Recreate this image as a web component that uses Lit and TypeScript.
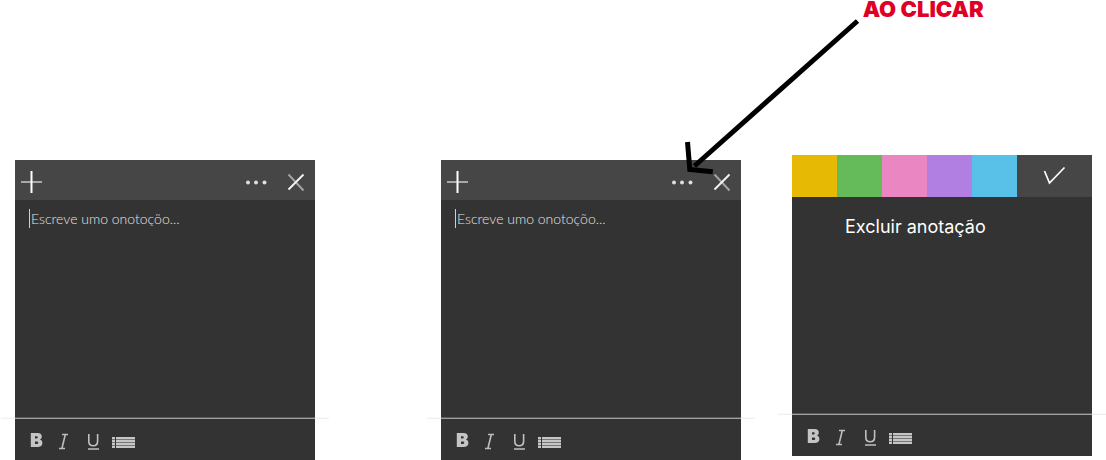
import { LitElement, html, css } from "lit";
import { customElement, property } from "lit/decorators.js";

@customElement("note-toolbar")
class NoteToolbar extends LitElement {
  static styles = css`
    :host { display: block; }
    .bar {
      display: flex;
      align-items: flex-start;
      position: relative;
      height: 42px;
      box-sizing: border-box;
      padding: 14px 15px 0;
    }
    .rule {
      position: absolute;
      top: -1px;
      left: -14px;
      right: -14px;
      height: 2px;
      background: linear-gradient(#fafafa 50%, #f0f0f0 50%);
    }
    .rule::after {
      content: "";
      position: absolute;
      inset: 0 14px;
      background: linear-gradient(#5c5c5c 50%, #a0a0a0 50%);
    }
    button {
      border: 0;
      padding: 0;
      background: none;
      display: block;
      height: 18px;
    }
    svg { display: block; }
    .bold { width: 14px; margin-right: 12px; }
    .italic { width: 14px; margin-right: 16px; }
    .underline { width: 14px; margin-right: 12px; }
    .list { width: 23px; }
  `;
  render() {
    return html`
      <div class="bar" role="toolbar" aria-label="Formatação">
        <div class="rule"></div>
        <button class="bold" aria-label="Negrito">
          <svg width="14" height="18" viewBox="0 0 14 18">
            <path fill="#c4c4c4" fill-rule="evenodd" d="M.8 1h6.700c3 0 4.300 1.400 4.300 3.500 0 1.500-.7 2.500-1.900 3 1.600.5 2.500 1.700 2.500 3.400 0 2.700-1.800 4.100-4.900 4.100H.8zM5 4.200v2.200h1.700c1.500 0 1.500-2.200 0-2.200zM5 9.500V12h1.900c1.800 0 1.800-2.500 0-2.500z"/>
          </svg>
        </button>
        <button class="italic" aria-label="Itálico">
          <svg width="14" height="18" viewBox="0 0 14 18" fill="none" stroke="#bdbdbd">
            <path stroke-width="1.300" d="M6 2.500h6M3 16.500h6"/><path stroke-width="1.600" d="M9.300 2.500l-3.400 14"/>
          </svg>
        </button>
        <button class="underline" aria-label="Sublinhado">
          <svg width="14" height="18" viewBox="0 0 14 18" fill="none" stroke="#c0c0c0">
            <path stroke-width="1.600" d="M2.800 2v7.200c0 2.900 1.700 4.500 4.400 4.500s4.400-1.600 4.400-4.500V2"/><path stroke-width="1.500" d="M2 17h11"/>
          </svg>
        </button>
        <button class="list" aria-label="Lista">
          <svg width="23" height="18" viewBox="0 0 23 18">
            <path fill="#777" d="M0 5h23v11H0z"/>
            <path fill="#c6c6c6" d="M0 5h3v2H0zM0 8h3v2H0zM0 11h3v2H0zM0 14h3v2H0zM4 5h19v2H4zM4 8h19v2H4zM4 11h19v2H4zM4 14h19v2H4z"/>
            <path fill="#333" d="M3 5h1v11H3z"/>
          </svg>
        </button>
      </div>`;
  }
}

@customElement("note-editor")
class NoteEditor extends LitElement {
  static styles = css`
    :host { display: flex; flex-direction: column; background: #333; }
    header {
      display: flex;
      align-items: center;
      height: 40px;
      box-sizing: border-box;
      padding: 4px 8px 0 5px;
      background: #464646;
    }
    button { border: 0; padding: 0; background: none; display: block; }
    svg { display: block; }
    .add { margin-right: auto; }
    .more { margin-right: 17px; }
    .body { flex: 1; display: flex; padding: 9px 14px; }
    .caret { width: 1px; height: 19px; background: #d0d0d0; flex: none; }
    textarea {
      flex: 1;
      min-width: 0;
      border: 0;
      outline: 0;
      resize: none;
      margin: 0;
      padding: 0 0 0 1px;
      background: none;
      color: #e4e4e4;
      font: 300 14px/20px Lato, sans-serif;
    }
    textarea::placeholder { color: #e4e4e4; opacity: 1; }
  `;
  render() {
    return html`
      <header>
        <button class="add" aria-label="Nova anotação">
          <svg width="23" height="24" viewBox="0 0 23 24">
            <path stroke="#a8a8a8" stroke-width="2" d="M1 12h21"/>
            <path stroke="#fff" stroke-width="2" d="M11.500 1v22"/>
          </svg>
        </button>
        <button class="more" aria-label="Mais opções">
          <svg width="24" height="24" viewBox="0 0 24 24" fill="#dedede">
            <circle cx="4" cy="12.500" r="2"/><circle cx="12" cy="12.500" r="2"/><circle cx="20.500" cy="12.500" r="2"/>
          </svg>
        </button>
        <button class="close" aria-label="Fechar">
          <svg width="22" height="24" viewBox="0 0 22 24" fill="none" stroke-width="2">
            <path stroke="#a4a4a4" d="M3.500 4.500l15 16"/>
            <path stroke="#f4f4f4" d="M18.500 4.500l-15 15"/>
          </svg>
        </button>
      </header>
      <div class="body">
        <span class="caret"></span>
        <textarea aria-label="Anotação" placeholder="Escreve umo onotoçõo..."></textarea>
      </div>
      <note-toolbar></note-toolbar>`;
  }
}

@customElement("note-menu")
class NoteMenu extends LitElement {
  @property({ type: Array }) colors = [
    { name: "Amarelo", value: "#e6b905" },
    { name: "Verde", value: "#65ba5a" },
    { name: "Rosa", value: "#ea86c2" },
    { name: "Roxo", value: "#b17fe2" },
    { name: "Azul", value: "#59c0e7" },
  ];
  static styles = css`
    :host { display: flex; flex-direction: column; background: #333; }
    .colors { display: grid; grid-template-columns: repeat(5, 3fr) 5fr; height: 42px; background: #464646; }
    button { border: 0; padding: 0; background: none; display: block; }
    .done svg { display: block; margin: auto; }
    .body { flex: 1; padding: 18px 53px; }
    .delete { color: #fff; font: 400 18px/24px Inter, sans-serif; white-space: nowrap; }
  `;
  render() {
    return html`
      <div class="colors">
        ${this.colors.map((c) => html`<button aria-label=${c.name} style="background:${c.value}"></button>`)}
        <button class="done" aria-label="Concluir">
          <svg width="24" height="20" viewBox="0 0 24 20" fill="none" stroke="#fff" stroke-width="1.700"><path d="M1.500 5l5 12L21.500 1.500"/></svg>
        </button>
      </div>
      <div class="body"><button class="delete">Excluir anotação</button></div>
      <note-toolbar></note-toolbar>`;
  }
}

@customElement("app-root")
class AppRoot extends LitElement {
  static styles = css`
    :host { display: block; position: relative; background: #fff; min-height: 100vh; }
    .title {
      margin: 0;
      padding-left: 78%;
      color: #e00025;
      font: 900 22px/18px Inter, sans-serif;
      white-space: nowrap;
      height: 155px;
      box-sizing: border-box;
    }
    .notes {
      display: grid;
      grid-template-columns: minmax(0, 300fr) 126fr minmax(0, 300fr) 51fr minmax(0, 300fr);
      padding: 0 14px 0 15px;
    }
    note-editor { height: 300px; margin-top: 5px; }
    .second { grid-column: 3; }
    note-menu { grid-column: 5; height: 301px; }
    .arrow { position: absolute; top: 0; left: 680px; pointer-events: none; }
  `;
  render() {
    return html`
      <h1 class="title">AO CLICAR</h1>
      <main class="notes">
        <note-editor></note-editor>
        <note-editor class="second"></note-editor>
        <note-menu></note-menu>
      </main>
      <svg class="arrow" width="184" height="184" viewBox="0 0 184 184" fill="none" stroke="#000" stroke-width="5">
        <path d="M177.500 21L14.500 166"/>
        <path d="M7.500 142l2.300 27.500 23 2.200"/>
      </svg>`;
  }
}
